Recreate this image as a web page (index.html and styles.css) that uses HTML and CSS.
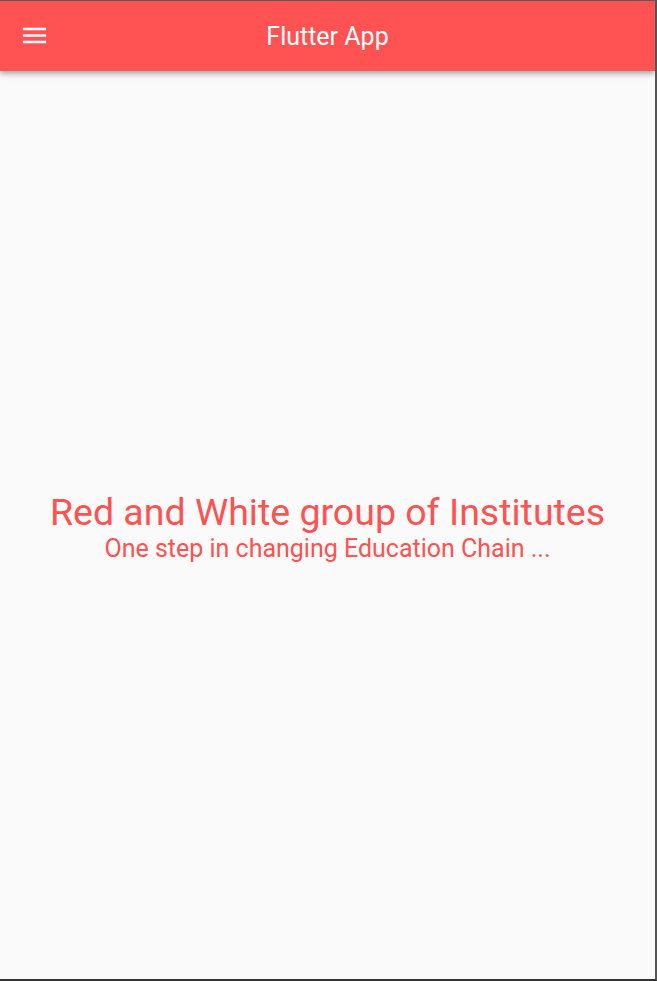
FILE: index.html
```html
<!DOCTYPE html>
<html>
<head>
<meta charset="utf-8">
<link rel="stylesheet" href="styles.css">
</head>
<body>
<div class="frame">
  <header class="appbar">
    <button class="menu" aria-label="Menu">
      <svg viewBox="0 0 24 24" width="31" height="31"><path d="M3 18h18v-2H3v2zm0-5h18v-2H3v2zm0-7v2h18V6H3z" fill="#fff"/></svg>
    </button>
    <h1 class="title">Flutter App</h1>
  </header>
  <main class="content">
    <div class="heading">Red and White group of Institutes</div>
    <div class="sub">One step in changing Education Chain ...</div>
  </main>
</div>
</body>
</html>
```
FILE: styles.css
```css
html, body { margin: 0; padding: 0; }
body { background: #fafafa; font-family: Roboto, "Noto Sans", sans-serif; }
.frame {
  width: 655px;
  height: 978px;
  border-top: 1px solid #5a5a5a;
  border-right: 2px solid #555;
  border-bottom: 2px solid #333;
  background: #fafafa;
  display: flex;
  flex-direction: column;
  overflow: hidden;
}
.appbar {
  position: relative;
  height: 70px;
  flex: none;
  background: #ff5252;
  display: flex;
  align-items: center;
  justify-content: center;
  box-shadow: 0 2px 4px -1px rgba(0,0,0,.2), 0 4px 5px 0 rgba(0,0,0,.14), 0 1px 10px 0 rgba(0,0,0,.12);
  z-index: 1;
}
.menu {
  position: absolute;
  left: 19px;
  top: 19px;
  width: 31px;
  height: 31px;
  padding: 0;
  border: 0;
  background: none;
  display: flex;
}
.title {
  margin: 0;
  color: #fff;
  font-size: 25px;
  font-weight: 400;
}
.content {
  flex: 1;
  display: flex;
  flex-direction: column;
  align-items: center;
  justify-content: center;
  color: #ff5252;
  padding-top: 6px;
}
.heading { font-size: 37.5px; line-height: 40px; }
.sub { font-size: 25px; line-height: 30px; margin-top: 2px; }
```
